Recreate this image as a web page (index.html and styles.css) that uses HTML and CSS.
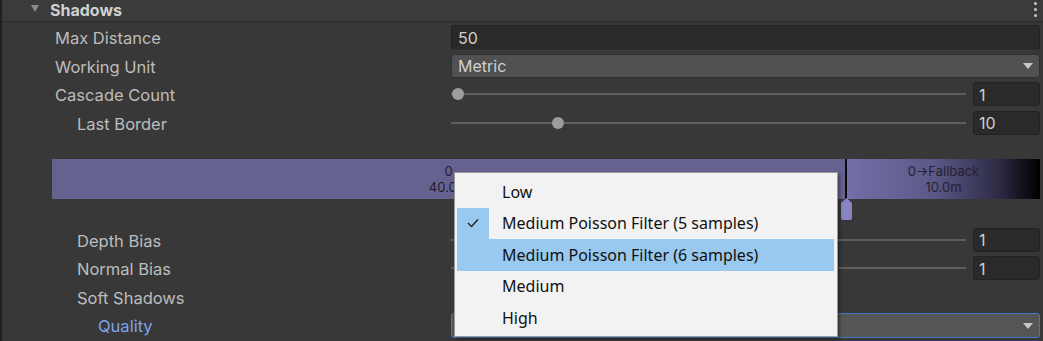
FILE: index.html
```html
<!DOCTYPE html>
<html>
<head>
<meta charset="utf-8">
<link rel="stylesheet" href="styles.css">
</head>
<body>
<div class="inspector">
  <div class="header">
    <svg class="foldout" width="8" height="7" viewBox="0 0 8 7"><path d="M0 0 H8 L4 7 Z" fill="#8a8a8a"/></svg>
    <span class="title">Shadows</span>
    <span class="kebab"><i></i><i></i><i></i></span>
  </div>
  <div class="rows rows-top">
    <div class="row">
      <span class="lbl l1">Max Distance</span>
      <div class="field text">50</div>
    </div>
    <div class="row">
      <span class="lbl l1">Working Unit</span>
      <div class="field dropdown"><span>Metric</span><svg class="arrow" width="10" height="6" viewBox="0 0 10 6"><path d="M0 0 H10 L5 6 Z" fill="#c8c8c8"/></svg></div>
    </div>
    <div class="row">
      <span class="lbl l1">Cascade Count</span>
      <div class="slider">
        <div class="track"><span class="thumb" style="left:0%"></span></div>
        <div class="field num">1</div>
      </div>
    </div>
    <div class="row">
      <span class="lbl l2">Last Border</span>
      <div class="slider">
        <div class="track"><span class="thumb" style="left:19.5%"></span></div>
        <div class="field num">10</div>
      </div>
    </div>
  </div>

  <div class="cascade">
    <div class="seg seg0"><span>0</span><span>40.0m</span></div>
    <div class="divider"></div>
    <div class="seg fallback"><span>0→Fallback</span><span>10.0m</span></div>
    <svg class="handle" width="11" height="22" viewBox="0 0 11 22"><path d="M5.5 0 L11 5 V20 Q11 22 9 22 H2 Q0 22 0 20 V5 Z" fill="#8884c4"/></svg>
  </div>

  <div class="rows rows-bottom">
    <div class="row">
      <span class="lbl l2">Depth Bias</span>
      <div class="slider">
        <div class="track"><span class="thumb" style="left:10%"></span></div>
        <div class="field num">1</div>
      </div>
    </div>
    <div class="row">
      <span class="lbl l2">Normal Bias</span>
      <div class="slider">
        <div class="track"><span class="thumb" style="left:10%"></span></div>
        <div class="field num">1</div>
      </div>
    </div>
    <div class="row">
      <span class="lbl l2">Soft Shadows</span>
      <div class="empty"></div>
    </div>
    <div class="row">
      <span class="lbl l3 blue">Quality</span>
      <div class="field dropdown focus"><span></span><svg class="arrow" width="10" height="6" viewBox="0 0 10 6"><path d="M0 0 H10 L5 6 Z" fill="#c8c8c8"/></svg></div>
    </div>
  </div>

  <div class="popup">
    <div class="item"><span class="check"></span><span class="itext">Low</span></div>
    <div class="item checked"><span class="check"><svg width="12" height="10" viewBox="0 0 12 10"><path d="M1 5 L4.5 8.5 L11 1.5" fill="none" stroke="#222" stroke-width="1.4"/></svg></span><span class="itext">Medium Poisson Filter (5 samples)</span></div>
    <div class="item hover"><span class="check"></span><span class="itext">Medium Poisson Filter (6 samples)</span></div>
    <div class="item"><span class="check"></span><span class="itext">Medium</span></div>
    <div class="item"><span class="check"></span><span class="itext">High</span></div>
  </div>
</div>
</body>
</html>
```
FILE: styles.css
```css
html, body {
  margin: 0;
  padding: 0;
  background: #383838;
}
body {
  width: 1043px;
  height: 341px;
  overflow: hidden;
}
.inspector {
  position: relative;
  width: 1043px;
  height: 341px;
  box-sizing: border-box;
  border-left: 2px solid #1f1f1f;
  background: #383838;
  font-family: Inter, "Noto Sans", sans-serif;
  font-size: 16.5px;
  color: #bdbdbd;
}
.header {
  height: 22px;
  background: #3b3b3b;
  border-bottom: 1px solid #2c2c2c;
  box-sizing: border-box;
  display: flex;
  align-items: center;
  padding-left: 29px;
  padding-right: 6px;
}
.foldout {
  margin-top: -5px;
}
.title {
  margin-left: 11px;
  font-weight: 700;
  font-size: 16px;
  color: #d0d0d0;
  margin-top: -2px;
}
.kebab {
  margin-left: auto;
  display: flex;
  flex-direction: column;
  gap: 3px;
  margin-top: -2px;
}
.kebab i {
  display: block;
  width: 3px;
  height: 3px;
  border-radius: 50%;
  background: #c8c8c8;
}
.rows {
  display: flex;
  flex-direction: column;
  gap: 4.5px;
  padding-right: 3px;
}
.rows-top {
  padding-top: 2px;
}
.rows-bottom {
  padding-top: 28px;
}
.row {
  display: grid;
  grid-template-columns: 449px 1fr;
  height: 24px;
  align-items: center;
}
.lbl {
  white-space: nowrap;
  line-height: 24px;
  padding-top: 2px;
}
.l1 { padding-left: 53px; }
.l2 { padding-left: 75px; }
.l3 { padding-left: 96px; }
.blue { color: #7ea3ea; }
.field {
  height: 24px;
  box-sizing: border-box;
  border-radius: 3px;
  display: flex;
  align-items: center;
  padding-left: 6px;
  padding-top: 1px;
  color: #d0d0d0;
  font-size: 16px;
}
.text {
  background: #2a2a2a;
  border: 1px solid #212121;
  border-bottom-color: #2f2f2f;
  height: 25px;
}
.dropdown {
  background: #515151;
  border: 1px solid #303030;
  justify-content: space-between;
  padding-right: 6px;
}
.dropdown.focus {
  border-color: #3d7cc0;
  background: #555555;
  height: 25px;
}
.arrow {
  flex: none;
}
.slider {
  display: flex;
  gap: 7px;
  align-items: center;
  height: 24px;
}
.track {
  position: relative;
  flex: 1;
  height: 24px;
}
.track::before {
  content: "";
  position: absolute;
  left: 0;
  right: 0;
  top: 11px;
  height: 2px;
  background: #5e5e5e;
}
.thumb {
  position: absolute;
  top: 6px;
  width: 12px;
  height: 12px;
  margin-left: 1px;
  border-radius: 50%;
  background: #9d9d9d;
}
.num {
  width: 67px;
  flex: none;
  background: #2a2a2a;
  border: 1px solid #222;
  padding-left: 5px;
}
.cascade {
  position: relative;
  margin: 25px 3px 0 50px;
  height: 40px;
  display: flex;
}
.seg {
  display: flex;
  flex-direction: column;
  align-items: center;
  justify-content: center;
  font-size: 13px;
  line-height: 16px;
  color: #1e1d2c;
  font-family: Inter, sans-serif;
}
.seg0 {
  width: 793px;
  background: #66628f;
}
.divider {
  width: 2px;
  background: #0c0c10;
}
.fallback {
  flex: 1;
  background: linear-gradient(90deg, #736fa8 0%, #5c5888 45%, #2e2c46 78%, #000 100%);
  color: #24222f;
}
.handle {
  position: absolute;
  left: 789px;
  top: 39px;
}
.empty { height: 24px; }
.popup {
  position: absolute;
  left: 452px;
  top: 172px;
  width: 384px;
  height: 165px;
  box-sizing: border-box;
  background: #f2f2f2;
  border: 1px solid #9a9a9a;
  box-shadow: 2px 2px 3px rgba(0,0,0,0.35);
  padding: 3px 3px 2px 2px;
  font-family: "Noto Sans", "Open Sans", sans-serif;
  font-size: 16px;
  color: #111;
}
.item {
  height: 31.5px;
  display: flex;
  align-items: center;
}
.check {
  width: 32px;
  height: 100%;
  flex: none;
  display: flex;
  align-items: center;
  justify-content: center;
}
.checked .check {
  background: #99c9ef;
}
.hover {
  background: #99c9ef;
}
.itext {
  padding-left: 13px;
  white-space: nowrap;
}
```
